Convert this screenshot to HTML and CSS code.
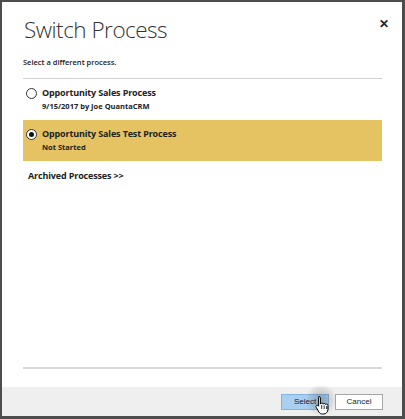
FILE: index.html
```html
<!DOCTYPE html>
<html>
<head>
  <meta charset="UTF-8">
  <title>Switch Process</title>
  <link rel="stylesheet" href="styles.css">
</head>
<body>
  <div class="dialog">
    <div class="head">
      <h1>Switch Process</h1>
      <span class="close">&#x2715;</span>
    </div>
    <p class="hint">Select a different process.</p>
    <div class="list">
      <div class="item">
        <span class="radio"></span>
        <div class="info">
          <div class="name">Opportunity Sales Process</div>
          <div class="meta">9/15/2017 by Joe QuantaCRM</div>
        </div>
      </div>
      <div class="item selected">
        <span class="radio on"></span>
        <div class="info">
          <div class="name">Opportunity Sales Test Process</div>
          <div class="meta">Not Started</div>
        </div>
      </div>
      <div class="archived">Archived Processes &gt;&gt;</div>
    </div>
    <div class="foot">
      <button class="btn primary">Select</button>
      <button class="btn">Cancel</button>
      <!-- mouse pointer over the Select button -->
      <div class="pointer">
        <svg width="14" height="20" viewBox="0 0 14 20">
          <path d="M4 1.5c.8 0 1.4.6 1.4 1.4v6.2c.2-.6.7-1 1.3-1 .7 0 1.2.5 1.3 1.1.2-.5.7-.8 1.2-.8.7 0 1.2.5 1.3 1.1.2-.3.6-.5 1-.5.8 0 1.4.6 1.4 1.4v4c0 2.5-1.8 4.6-4.4 4.6H7.2c-1.4 0-2.4-.7-3.2-1.8L1.2 12.3c-.4-.6-.3-1.4.3-1.8.6-.4 1.3-.3 1.7.2l.4.5V2.9C3.6 2.1 3.3 1.5 4 1.5z" fill="#fff" stroke="#000" stroke-width="1"/>
          <path d="M6.7 10v4M9.2 10.3v3.7M11.6 11v3" stroke="#000" stroke-width="0.8"/>
        </svg>
      </div>
    </div>
  </div>
</body>
</html>
```

FILE: styles.css
```css
html, body {
  margin: 0;
  padding: 0;
  background: #4d4d4d;
}
.dialog {
  margin: 2px 3px 0 2px;
  height: 414px;
  background: #fff;
  display: flex;
  flex-direction: column;
  font-family: "Open Sans", "Liberation Sans", sans-serif;
  color: #222;
}
.head {
  display: flex;
  justify-content: space-between;
  align-items: flex-start;
  padding: 10px 13px 0 22px;
}
.head h1 {
  margin: 0;
  font-size: 22.5px;
  font-weight: 300;
  line-height: 36px;
  color: #333;
  letter-spacing: -0.5px;
}
.close {
  font-size: 12px;
  font-weight: bold;
  line-height: 12px;
  margin-top: 6px;
  color: #222;
}
.hint {
  margin: 9px 0 0 21px;
  font-size: 7.5px;
  font-weight: 600;
  line-height: 10px;
}
.list {
  margin: 11px 20px 18px 21px;
  border-top: 1px solid #d2d2d2;
  border-bottom: 2px solid #d8d8d8;
  flex: 1;
}
.item {
  display: flex;
  align-items: flex-start;
  padding: 7px 0 9px 3px;
  height: 25px;
}
.item.selected {
  background: #e5c262;
}
.radio {
  width: 9px;
  height: 9px;
  border: 1px solid #333;
  border-radius: 50%;
  background: #fff;
  margin: 2px 5px 0 0;
  box-sizing: content-box;
  position: relative;
}
.radio.on::after {
  content: "";
  position: absolute;
  left: 2px;
  top: 2px;
  width: 5px;
  height: 5px;
  border-radius: 50%;
  background: #111;
}
.name {
  font-size: 9px;
  font-weight: 700;
  line-height: 13px;
  letter-spacing: -0.15px;
  color: #222;
}
.meta {
  margin-top: 2px;
  font-size: 7.5px;
  font-weight: 700;
  line-height: 10px;
  color: #222;
}
.archived {
  padding: 8px 0 0 5px;
  font-size: 9px;
  font-weight: 700;
  letter-spacing: -0.15px;
  color: #222;
}
.foot {
  height: 29px;
  background: #efefef;
  display: flex;
  justify-content: flex-end;
  align-items: center;
  gap: 6px;
  padding-right: 19px;
  position: relative;
}
.btn {
  width: 48px;
  height: 16px;
  padding: 0;
  font-family: "Liberation Sans", sans-serif;
  font-size: 8px;
  color: #222;
  background: #fff;
  border: 1px solid #a6a6a6;
}
.btn.primary {
  background: #a9cff1;
  border-color: #86b1da;
}
.pointer {
  position: absolute;
  left: 304px;
  top: -4px;
  width: 30px;
  height: 34px;
  border-radius: 50%;
  background: radial-gradient(circle, rgba(80, 80, 80, 0.35) 0%, rgba(80, 80, 80, 0.15) 45%, rgba(80, 80, 80, 0) 70%);
  display: flex;
  align-items: center;
  justify-content: center;
}
.pointer svg {
  margin: 10px 0 0 2px;
}
```
